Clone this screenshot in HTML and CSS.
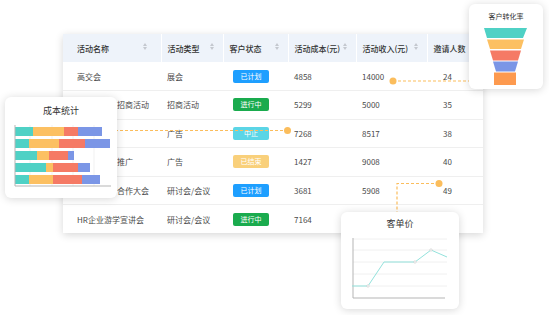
FILE: index.html
```html
<!DOCTYPE html>
<html lang="zh-CN">
<head>
    <meta charset="UTF-8">
    <title>活动列表</title>
    <link rel="stylesheet" href="styles.css">
</head>
<body>
<div class="stage">

    <div class="table-card">
        <table class="activity-table">
            <colgroup>
                <col style="width:98px">
                <col style="width:62px">
                <col style="width:65px">
                <col style="width:68px">
                <col style="width:71px">
                <col style="width:56px">
            </colgroup>
            <thead>
                <tr>
                    <th class="first"><span>活动名称</span><i class="sort"></i></th>
                    <th><span>活动类型</span><i class="sort"></i></th>
                    <th><span>客户状态</span><i class="sort"></i></th>
                    <th><span>活动成本(元)</span><i class="sort"></i></th>
                    <th><span>活动收入(元)</span><i class="sort"></i></th>
                    <th class="last"><span>邀请人数</span></th>
                </tr>
            </thead>
            <tbody>
                <tr>
                    <td class="first">高交会</td>
                    <td>展会</td>
                    <td class="state"><span class="badge plan">已计划</span></td>
                    <td>4858</td>
                    <td>14000</td>
                    <td class="last">24</td>
                </tr>
                <tr>
                    <td class="first">重点产业链招商活动</td>
                    <td>招商活动</td>
                    <td class="state"><span class="badge doing">进行中</span></td>
                    <td>5299</td>
                    <td>5000</td>
                    <td class="last">35</td>
                </tr>
                <tr>
                    <td class="first">线上广告</td>
                    <td>广告</td>
                    <td class="state"><span class="badge stop">中止</span></td>
                    <td>7268</td>
                    <td>8517</td>
                    <td class="last">38</td>
                </tr>
                <tr>
                    <td class="first">新媒体渠道推广</td>
                    <td>广告</td>
                    <td class="state"><span class="badge done">已结束</span></td>
                    <td>1427</td>
                    <td>9008</td>
                    <td class="last">40</td>
                </tr>
                <tr>
                    <td class="first">华南区商务合作大会</td>
                    <td>研讨会/会议</td>
                    <td class="state"><span class="badge plan">已计划</span></td>
                    <td>3681</td>
                    <td>5908</td>
                    <td class="last">49</td>
                </tr>
                <tr>
                    <td class="first">HR企业游学宣讲会</td>
                    <td>研讨会/会议</td>
                    <td class="state"><span class="badge doing">进行中</span></td>
                    <td>7164</td>
                    <td></td>
                    <td class="last"></td>
                </tr>
            </tbody>
        </table>
    </div>

    <!-- 连接线 -->
    <svg class="links" width="549" height="315" viewBox="0 0 549 315">
        <g stroke="#fbbd5c" stroke-width="1.2" stroke-dasharray="3 2" fill="none">
            <path d="M393 81 H472"/>
            <path d="M110 130.5 H287"/>
            <path d="M439 183.5 H397 V215"/>
        </g>
        <g fill="#fbbd5c">
            <circle cx="393" cy="81" r="3.5"/>
            <circle cx="287.5" cy="130.5" r="3.5"/>
            <circle cx="439" cy="183.5" r="3.5"/>
        </g>
    </svg>

    <div class="chart-card cost-card">
        <div class="chart-title">成本统计</div>
        <svg width="112" height="70" viewBox="0 0 112 70">
            <g stroke="#eeeeee" stroke-width="0.8">
                <path d="M25 2 V63 M47 2 V63 M68 2 V63 M89 2 V63"/>
            </g>
            <g>
                <rect x="10" y="4" width="18" height="9" fill="#4fd1c5"/>
                <rect x="28" y="4" width="31" height="9" fill="#fcc062"/>
                <rect x="59" y="4" width="14" height="9" fill="#f57a65"/>
                <rect x="73" y="4" width="24" height="9" fill="#7b96e6"/>

                <rect x="10" y="16" width="14" height="9" fill="#4fd1c5"/>
                <rect x="24" y="16" width="30" height="9" fill="#fcc062"/>
                <rect x="54" y="16" width="26" height="9" fill="#f57a65"/>
                <rect x="80" y="16" width="25" height="9" fill="#7b96e6"/>

                <rect x="10" y="28" width="22" height="9" fill="#4fd1c5"/>
                <rect x="32" y="28" width="12" height="9" fill="#fcc062"/>
                <rect x="44" y="28" width="19" height="9" fill="#f57a65"/>
                <rect x="63" y="28" width="6" height="9" fill="#7b96e6"/>

                <rect x="10" y="40" width="31" height="9" fill="#4fd1c5"/>
                <rect x="41" y="40" width="7" height="9" fill="#fcc062"/>
                <rect x="48" y="40" width="25" height="9" fill="#f57a65"/>
                <rect x="73" y="40" width="12" height="9" fill="#7b96e6"/>

                <rect x="10" y="52" width="14" height="9" fill="#4fd1c5"/>
                <rect x="24" y="52" width="24" height="9" fill="#fcc062"/>
                <rect x="48" y="52" width="29" height="9" fill="#f57a65"/>
                <rect x="77" y="52" width="18" height="9" fill="#7b96e6"/>
            </g>
            <path d="M10 2 V63 H106" stroke="#b5b5b5" stroke-width="1" fill="none"/>
        </svg>
    </div>

    <div class="chart-card funnel-card">
        <div class="chart-title small">客户转化率</div>
        <svg width="74" height="60" viewBox="0 0 74 60">
            <polygon points="15,2 58,2 54,12 18,12" fill="#4fd1c5"/>
            <polygon points="18,13.5 55,13.5 52,23 21,23" fill="#fcc062"/>
            <polygon points="21,24.5 52,24.5 49,34.5 24,34.5" fill="#f57a65"/>
            <polygon points="24,35.5 49,35.5 46,45.5 27,45.5" fill="#7b96e6"/>
            <rect x="25" y="46.5" width="22" height="12.5" fill="#fd9a4f"/>
        </svg>
    </div>

    <div class="chart-card price-card">
        <div class="chart-title">客单价</div>
        <svg width="118" height="72" viewBox="0 0 118 72">
            <g stroke="#ececec" stroke-width="0.8">
                <path d="M12 7 H106 M12 18 H106 M12 30 H106 M12 42 H106 M12 54 H106"/>
            </g>
            <path d="M12 6 V66 H104" stroke="#b5b5b5" stroke-width="1" fill="none"/>
            <polyline points="11,54 27,54 43,30 74,30 90,18 106,25" fill="none" stroke="#93e2dc" stroke-width="1"/>
            <g fill="#fff" stroke="#c8c8c8" stroke-width="0.6">
                <circle cx="27" cy="54" r="1.2"/>
                <circle cx="74" cy="30" r="1.2"/>
                <circle cx="90" cy="18" r="1.2"/>
            </g>
        </svg>
    </div>

</div>
</body>
</html>
```

FILE: styles.css
```css
* {
    box-sizing: border-box;
}
body {
    margin: 0;
    background: #fff;
    font-family: "Noto Sans CJK SC", "Noto Sans", sans-serif;
    color: #444;
}
.stage {
    position: relative;
    width: 549px;
    height: 315px;
    overflow: hidden;
    padding: 34px 0 0 63px;
}
.table-card {
    width: 420px;
    background: #fff;
    box-shadow: 0 2px 8px rgba(0, 0, 0, 0.16);
}
.activity-table {
    width: 420px;
    table-layout: fixed;
    border-collapse: collapse;
    font-size: 8px;
}
.activity-table th {
    height: 28px;
    background: #eef3fa;
    color: #333;
    font-weight: 500;
    text-align: left;
    padding: 0 8px 0 6px;
    border-right: 1px solid #fff;
    white-space: nowrap;
}
.activity-table th span {
    vertical-align: middle;
}
.activity-table th.first {
    padding-left: 14px;
    padding-right: 13px;
}
.activity-table th.last {
    border-right: none;
}
.sort {
    float: right;
    margin-top: 1px;
    width: 5px;
    height: 7px;
    position: relative;
}
.sort::before, .sort::after {
    content: "";
    position: absolute;
    left: 0;
    border-left: 2.5px solid transparent;
    border-right: 2.5px solid transparent;
}
.sort::before {
    top: 0;
    border-bottom: 3px solid #c4c8cf;
}
.sort::after {
    bottom: 0;
    border-top: 3px solid #c4c8cf;
}
.activity-table td {
    height: 28.5px;
    padding: 0 6px;
    border-top: 1px solid #efefef;
    white-space: nowrap;
    overflow: hidden;
    color: #4a4a4a;
}
.activity-table tbody tr:first-child td {
    border-top: none;
}
.activity-table td.first {
    padding-left: 14px;
}
.activity-table td.state {
    padding-left: 10px;
}
.activity-table td.last {
    padding-left: 16px;
}
.badge {
    display: inline-block;
    width: 36px;
    height: 13px;
    line-height: 13px;
    border-radius: 2px;
    color: #fff;
    font-size: 7px;
    text-align: center;
}
.badge.plan {
    background: #1e9fff;
}
.badge.doing {
    background: #1aab4e;
}
.badge.stop {
    background: #5bd5e6;
}
.badge.done {
    background: #f9d07b;
}
.links {
    position: absolute;
    left: 0;
    top: 0;
}
.chart-card {
    position: absolute;
    background: #fff;
    border-radius: 6px;
    box-shadow: 0 1px 8px rgba(0, 0, 0, 0.16);
}
.chart-card svg {
    display: block;
}
.chart-title {
    text-align: center;
    font-size: 9px;
    line-height: 12px;
    color: #333;
}
.chart-title.small {
    font-size: 7px;
}
.cost-card {
    left: 5px;
    top: 97px;
    width: 112px;
    height: 101px;
    padding-top: 8px;
}
.cost-card .chart-title {
    margin-bottom: 6px;
}
.funnel-card {
    left: 469px;
    top: 4px;
    width: 74px;
    height: 85px;
    padding-top: 6px;
}
.funnel-card .chart-title {
    margin-bottom: 4px;
}
.price-card {
    left: 341px;
    top: 212px;
    width: 118px;
    height: 97px;
    padding-top: 6px;
}
.price-card .chart-title {
    margin-bottom: 2px;
}
```
